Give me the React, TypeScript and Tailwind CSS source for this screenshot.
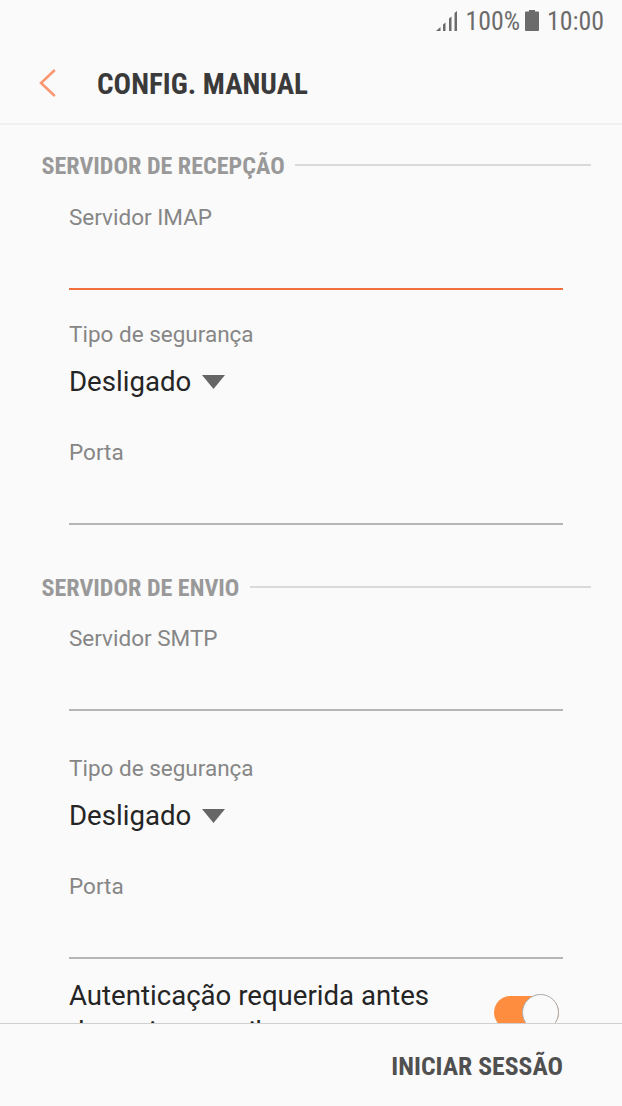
import React from 'react';

const condensed = "font-['Roboto_Condensed','Roboto',sans-serif] [font-stretch:75%] font-bold whitespace-nowrap";

function StatusBar() {
  return (
    <div className="flex h-[42px] shrink-0 items-center justify-end pr-[18px] text-[#6b6b6b]">
      <svg className="-mt-[2px] h-[22px] w-[22px]" viewBox="0 0 22 22" fill="currentColor">
        <path d="M0 22 4.500 18v4zM7 15.500l2.500-2V22H7zM13 9.500l2.500-2V22H13zM18.500 4l2.500-2v20h-2.500z" />
      </svg>
      <span className="ml-[8px] font-['Roboto_Condensed','Roboto',sans-serif] text-[25.8px] leading-[42px] [font-stretch:75%]">100%</span>
      <svg className="-mt-[1px] mr-[8px] ml-[5px] h-[21px] w-[14px]" viewBox="0 0 14 21" fill="currentColor">
        <path d="M4 0h6v1.500h3a1 1 0 0 1 1 1V20a1 1 0 0 1-1 1H1a1 1 0 0 1-1-1V2.500a1 1 0 0 1 1-1h3z" />
      </svg>
      <span className="font-['Roboto_Condensed','Roboto',sans-serif] text-[25.8px] leading-[42px] [font-stretch:75%]">10:00</span>
    </div>
  );
}

function Section({ title }: { title: string }) {
  return (
    <div className="flex h-8 items-center pr-[31px] pl-[41.500px]">
      <h2 className={`${condensed} text-[24.1px] leading-8 text-[#999999]`}>{title}</h2>
      <div className="ml-[10.500px] h-[2px] flex-1 -translate-y-px bg-[#dadada]" />
    </div>
  );
}

function Field({ label, active = false }: { label: string; active?: boolean }) {
  return (
    <label className="ml-[69px] block w-[494px]">
      <span className="block h-[30px] text-[22.5px] leading-[30px] text-[#868686]">{label}</span>
      <input
        aria-label={label}
        className={active
          ? "mb-[1px] block h-[58px] w-full border-b-2 border-[#f2703f] bg-transparent text-[27px] outline-none"
          : "block h-[58px] w-full border-b-2 border-[#b5b5b5] bg-transparent text-[27px] outline-none"}
      />
    </label>
  );
}

function SecurityType() {
  return (
    <div className="ml-[69px]">
      <div className="h-[30px] text-[22.5px] leading-[30px] text-[#868686]">Tipo de segurança</div>
      <button className="mt-[14px] flex h-[36px] items-center text-[27.6px] leading-[36px] text-[#252525]">
        <span className="mt-[2px]">Desligado</span>
        <svg className="mt-[2px] ml-[11px] h-[14px] w-[23px]" viewBox="0 0 23 14" fill="#666666">
          <path d="M0 0h23L11.500 14z" />
        </svg>
      </button>
    </div>
  );
}

export default function App() {
  return (
    <div className="flex h-[1106px] w-[622px] flex-col overflow-hidden bg-[#fafafa] font-['Roboto',sans-serif]">
      <StatusBar />
      <header className="flex h-[83px] shrink-0 items-center border-b-2 border-[#f0f0f0]">
        <svg className="ml-[38px] h-[28px] w-[18px]" viewBox="0 0 18 28" fill="none" stroke="#fb9670" strokeWidth="2.500">
          <path d="M16.800 1 3 14l13.800 13" />
        </svg>
        <h1 className={`${condensed} mt-[2px] ml-[41px] text-[29.1px] leading-10 text-[#3a3a3a]`}>CONFIG. MANUAL</h1>
      </header>
      <main className="min-h-0 flex-1 overflow-hidden">
        <div className="pt-[25px]"><Section title="SERVIDOR DE RECEPÇÃO" /></div>
        <div className="pt-5"><Field label="Servidor IMAP" active /></div>
        <div className="pt-[28px]"><SecurityType /></div>
        <div className="pt-[38px]"><Field label="Porta" /></div>
        <div className="pt-[47px]"><Section title="SERVIDOR DE ENVIO" /></div>
        <div className="pt-[19px]"><Field label="Servidor SMTP" /></div>
        <div className="pt-[42px]"><SecurityType /></div>
        <div className="pt-[38px]"><Field label="Porta" /></div>
        <div className="flex items-start justify-between pt-[19px] pr-[63px] pl-[69px]">
          <p className="w-[380px] text-[27.6px] leading-[36px] text-[#252525]">Autenticação requerida antes de enviar e-mails</p>
          <div role="switch" aria-checked="true" className="mt-[18px] flex h-[33px] w-[65px] items-center justify-end rounded-full bg-[#ff8d3f]">
            <div className="size-[37px] shrink-0 rounded-full border border-[#aaa] bg-[#fafafa]" />
          </div>
        </div>
      </main>
      <footer className="flex h-[83px] shrink-0 items-center justify-end border-t border-[#d0d0d0] pr-[59px]">
        <button className={`${condensed} mt-[1px] text-[25.7px] leading-9 text-[#505050]`}>INICIAR SESSÃO</button>
      </footer>
    </div>
  );
}
